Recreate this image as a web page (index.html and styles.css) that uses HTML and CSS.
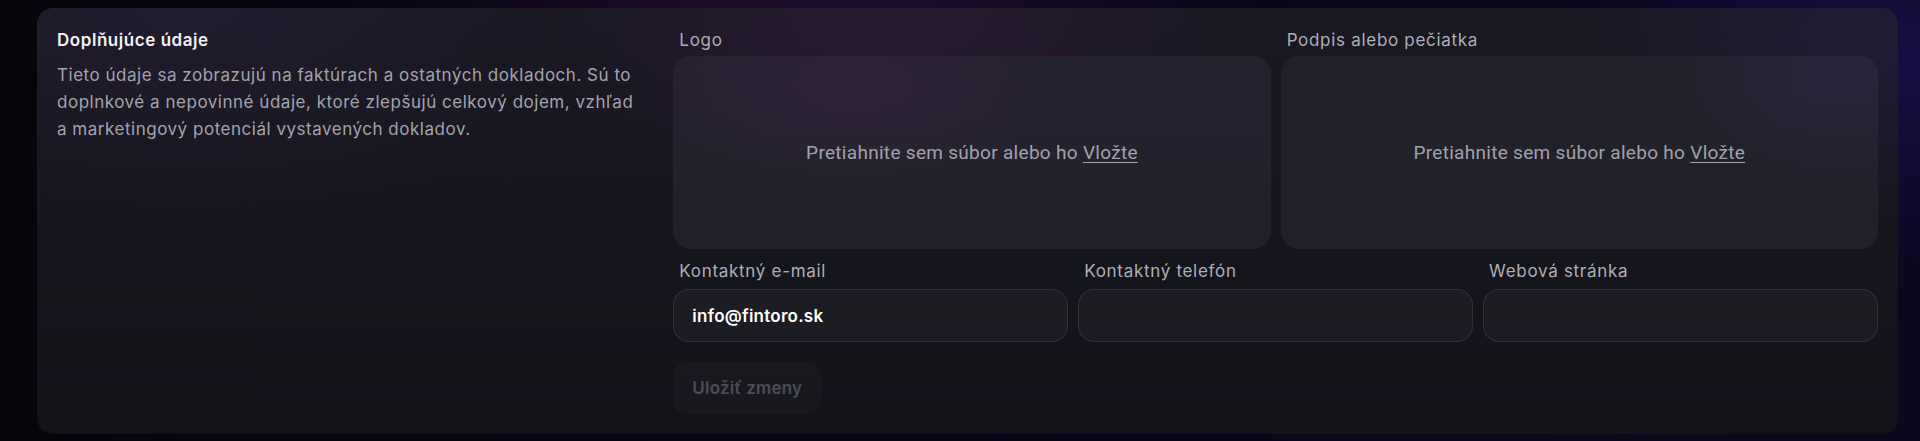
FILE: index.html
```html
<!DOCTYPE html>
<html lang="sk">
<head>
<meta charset="utf-8">
<title>Doplňujúce údaje</title>
<link rel="stylesheet" href="styles.css">
</head>
<body>
<div class="page">
  <section class="card">
    <div class="intro">
      <h2 class="title">Doplňujúce údaje</h2>
      <p class="desc">Tieto údaje sa zobrazujú na faktúrach a ostatných dokladoch. Sú to doplnkové a nepovinné údaje, ktoré zlepšujú celkový dojem, vzhľad a marketingový potenciál vystavených dokladov.</p>
    </div>
    <div class="form">
      <div class="row two">
        <div class="field">
          <label class="label">Logo</label>
          <div class="drop drop-a">
            <span>Pretiahnite sem súbor alebo ho <u>Vložte</u></span>
          </div>
        </div>
        <div class="field">
          <label class="label">Podpis alebo pečiatka</label>
          <div class="drop drop-b">
            <span>Pretiahnite sem súbor alebo ho <u>Vložte</u></span>
          </div>
        </div>
      </div>
      <div class="row three">
        <div class="field">
          <label class="label">Kontaktný e-mail</label>
          <div class="input">info@fintoro.sk</div>
        </div>
        <div class="field">
          <label class="label">Kontaktný telefón</label>
          <div class="input"></div>
        </div>
        <div class="field">
          <label class="label">Webová stránka</label>
          <div class="input"></div>
        </div>
      </div>
      <div class="actions">
        <button class="btn" type="button">Uložiť zmeny</button>
      </div>
    </div>
  </section>
</div>
</body>
</html>
```

FILE: styles.css
```css
* { box-sizing: border-box; }
html, body { margin: 0; height: 100%; }
body {
  background:
    radial-gradient(ellipse 500px 300px at 1900px 60px, rgba(40, 20, 110, 0.45), transparent 70%),
    radial-gradient(ellipse 700px 200px at 800px -40px, rgba(70, 20, 80, 0.5), transparent 70%),
    linear-gradient(90deg, #05060c 0%, #08071a 60%, #0c0820 100%);
  font-family: "Inter", "Noto Sans", sans-serif;
  color: #e8e8ef;
}
.page {
  padding: 8px 22px 8px 37px;
}
.card {
  display: grid;
  grid-template-columns: 1fr 2fr;
  column-gap: 14px;
  padding: 20px;
  border-radius: 16px;
  background:
    radial-gradient(ellipse 500px 260px at 850px 20px, rgba(70, 30, 80, 0.35), transparent 70%),
    radial-gradient(ellipse 400px 260px at 1820px 40px, rgba(50, 40, 100, 0.3), transparent 70%),
    radial-gradient(ellipse 600px 300px at 150px 0px, rgba(45, 35, 65, 0.4), transparent 70%),
    linear-gradient(180deg, #1a1823 0%, #15151d 55%, #121319 100%);
  min-height: 425px;
}
.title {
  margin: 0;
  font-size: 17px;
  line-height: 24px;
  font-weight: 600;
  color: #f2f2f6;
  letter-spacing: 0.55px;
}
.desc {
  margin: 10px 0 0;
  max-width: 586px;
  font-size: 17px;
  line-height: 27px;
  color: #a3a3ad;
  letter-spacing: 0.52px;
}
.form {
  display: flex;
  flex-direction: column;
}
.row {
  display: grid;
  column-gap: 10px;
}
.row.two { grid-template-columns: 1fr 1fr; }
.row.three { grid-template-columns: 1fr 1fr 1fr; margin-top: 10px; }
.field {
  display: flex;
  flex-direction: column;
  gap: 4px;
}
.row.three .field { gap: 6px; }
.label {
  font-size: 17px;
  line-height: 24px;
  color: #aeaeb8;
  padding-left: 6px;
  letter-spacing: 0.7px;
}
.drop {
  height: 193px;
  border-radius: 18px;
  display: flex;
  align-items: center;
  justify-content: center;
  font-family: "Roboto", "Inter", sans-serif;
  font-size: 19px;
  letter-spacing: 0.3px;
  color: #a2a2ad;
}
.drop-a {
  background:
    radial-gradient(ellipse 300px 140px at 180px 30px, rgba(70, 35, 80, 0.35), transparent 70%),
    linear-gradient(180deg, #252230 0%, #22212a 100%);
}
.drop-b {
  background:
    radial-gradient(ellipse 250px 160px at 560px 20px, rgba(60, 45, 100, 0.35), transparent 70%),
    linear-gradient(180deg, #22212b 0%, #20212a 100%);
}
.drop u {
  text-underline-offset: 3px;
  text-decoration-thickness: 1px;
}
.input {
  height: 53px;
  border-radius: 16px;
  border: 1px solid rgba(255, 255, 255, 0.09);
  background: rgba(255, 255, 255, 0.035);
  padding: 0 18px;
  display: flex;
  align-items: center;
  font-size: 17px;
  font-weight: 600;
  letter-spacing: 0.25px;
  color: #ffffff;
}
.actions {
  margin-top: 20px;
  display: flex;
}
.btn {
  height: 52px;
  padding: 0 19px;
  border: none;
  border-radius: 14px;
  background: rgba(255, 255, 255, 0.025);
  font-family: inherit;
  font-size: 17px;
  font-weight: 600;
  letter-spacing: 0.2px;
  color: #4c4c57;
}
```
